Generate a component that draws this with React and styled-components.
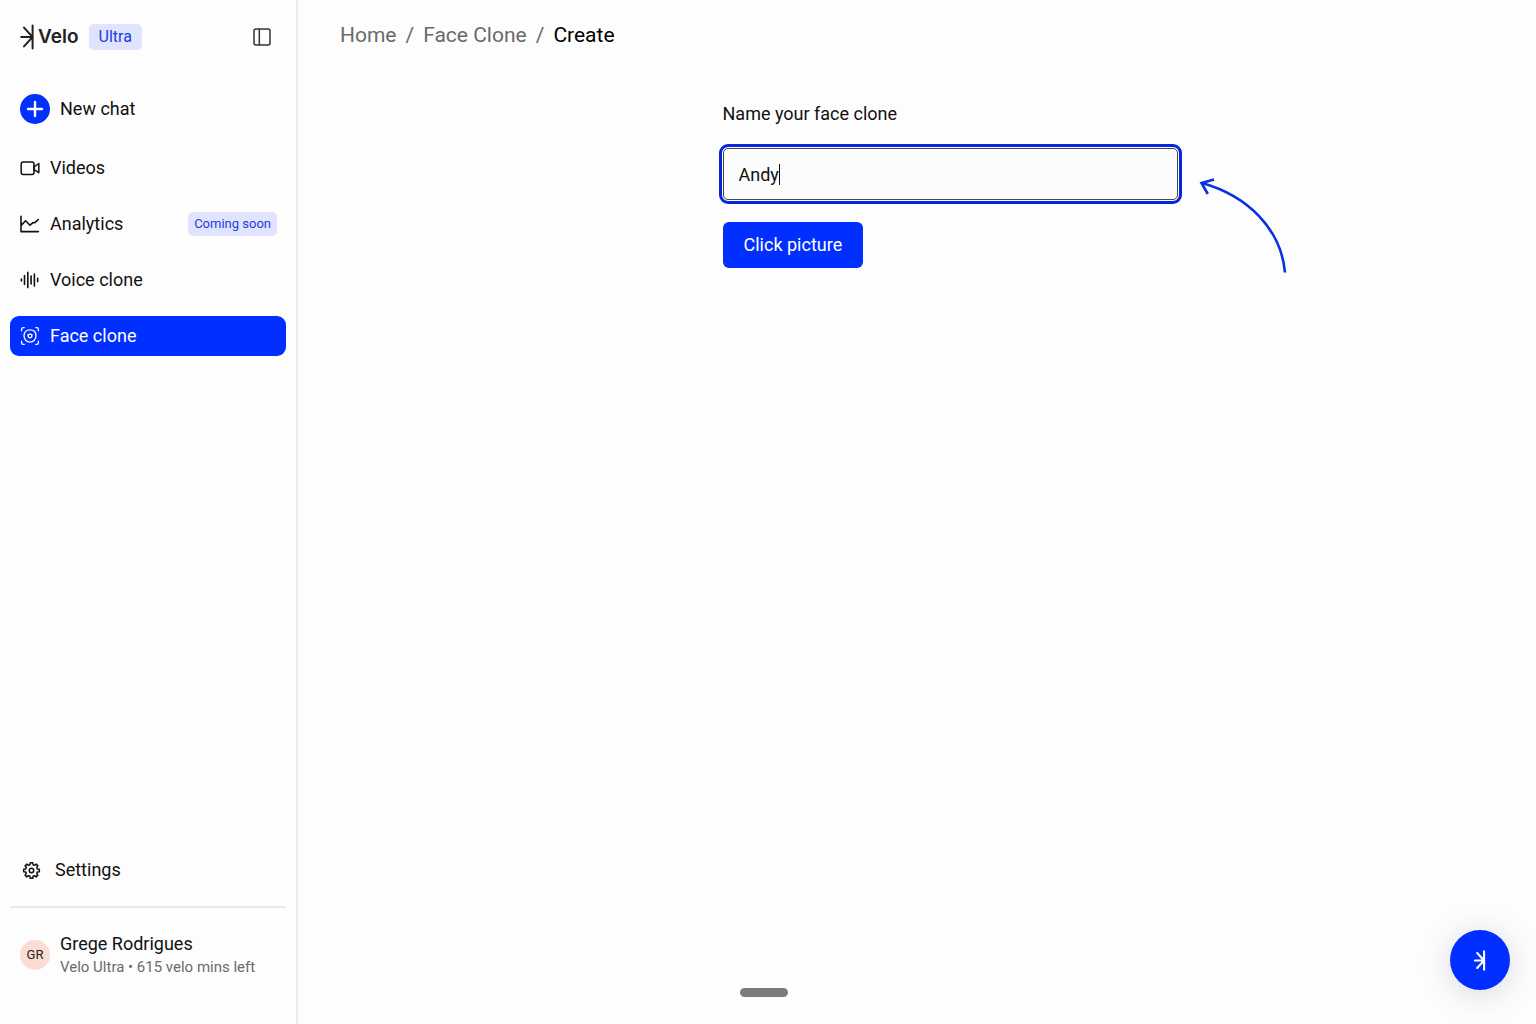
import React, { useLayoutEffect, useRef, useState } from 'react';
import styled, { createGlobalStyle } from 'styled-components';

const GlobalStyle = createGlobalStyle`
  * {
    box-sizing: border-box;
  }

  body {
    margin: 0;
    background-color: #fdfdfd;
    color: #111;
    font-family: Roboto, 'Liberation Sans', sans-serif;
    font-size: 18px;
    line-height: 24px;
  }

  button,
  input {
    font: inherit;
  }
`;

const Page = styled.div`
  display: flex;
  min-height: 100vh;
`;

const Sidebar = styled.aside`
  flex: 0 0 298px;
  display: flex;
  flex-direction: column;
  padding: 17px 10px 46px;
  border-right: 2px solid #ebebeb;
`;

const SidebarHeader = styled.div`
  display: flex;
  align-items: center;
  height: 40px;
  padding: 0 10px;
  margin-bottom: 32px;
`;

const Brand = styled.a`
  display: flex;
  align-items: center;
  gap: 3px;
  margin-right: 10px;
  color: #222;
  font-family: Inter, sans-serif;
  font-size: 19px;
  font-weight: 600;
  text-decoration: none;
`;

const Badge = styled.span`
  display: flex;
  align-items: center;
  height: ${({ $small }) => ($small ? '24px' : '26px')};
  padding: ${({ $small }) => ($small ? '0 6px' : '0 10px')};
  border-radius: 5px;
  background-color: #e0e3fd;
  color: #1a3fe0;
  font-size: ${({ $small }) => ($small ? '13px' : '16px')};
`;

const CollapseButton = styled.button`
  display: flex;
  margin-left: auto;
  padding: 5px;
  border: none;
  background: none;
  color: #333;
  cursor: pointer;
`;

const NavItem = styled.a`
  display: flex;
  align-items: center;
  gap: 10px;
  height: 40px;
  padding: 0 9px 0 10px;
  border-radius: 9px;
  background-color: ${({ $active }) => ($active ? '#002fff' : 'transparent')};
  color: ${({ $active }) => ($active ? '#fff' : '#111')};
  text-decoration: none;

  ${Badge} {
    margin-left: auto;
  }
`;

const PlusCircle = styled.span`
  display: flex;
  align-items: center;
  justify-content: center;
  width: 30px;
  height: 30px;
  border-radius: 50%;
  background-color: #002fff;
  color: #fff;
`;

const Nav = styled.nav`
  display: flex;
  flex-direction: column;
  gap: 16px;
  margin-top: 19px;
`;

const SidebarFooter = styled.div`
  margin-top: auto;
`;

const SettingsLink = styled(NavItem)`
  gap: 14px;
  padding-left: 12px;
`;

const Divider = styled.hr`
  height: 2px;
  margin: 16px 0 24px;
  border: none;
  background-color: #e9e9e9;
`;

const Profile = styled.div`
  display: flex;
  align-items: center;
  gap: 10px;
  padding: 0 10px;
`;

const Avatar = styled.span`
  display: flex;
  align-items: center;
  justify-content: center;
  width: 30px;
  height: 30px;
  border-radius: 50%;
  background-color: #fbdcd3;
  color: #222;
  font-size: 13px;
`;

const ProfilePlan = styled.div`
  color: #6b6b6b;
  font-size: 15px;
  line-height: 22px;
`;

const Main = styled.main`
  flex: 1;
  padding: 23px 42px;
`;

const Breadcrumbs = styled.nav`
  display: flex;
  gap: 9px;
  color: #6a6a6a;
  font-size: 21px;
`;

const Crumb = styled.a`
  color: ${({ $current }) => ($current ? '#000' : '#6a6a6a')};
  text-decoration: none;
`;

const Form = styled.form`
  display: flex;
  flex-direction: column;
  align-items: flex-start;
  width: 100%;
  padding-left: 66px;
  margin-top: 55px;
`;

const FormColumn = styled.div`
  width: 100%;
  max-width: 455px;
  margin: 0 auto;
`;

const Field = styled.div`
  position: relative;
  margin: 22px 0;
`;

const NameInput = styled.input`
  display: block;
  width: 100%;
  height: 52px;
  padding: 0 15px;
  border: 1px solid #444;
  border-radius: 5px;
  outline: 3px solid #0526dd;
  outline-offset: 1px;
  background-color: #fcfcfc;
  color: #111;
  caret-color: transparent;
`;

const Caret = styled.span`
  position: absolute;
  top: 16px;
  width: 1px;
  height: 21px;
  background-color: #111;
`;

const ArrowHint = styled.svg`
  position: absolute;
  top: 27px;
  left: calc(100% + 20px);
`;

const SubmitButton = styled.button`
  height: 46px;
  padding: 0 21px;
  border: none;
  border-radius: 6px;
  background-color: #002fff;
  color: #fff;
  cursor: pointer;
`;

const HelpButton = styled.button`
  position: fixed;
  right: 26px;
  bottom: 34px;
  display: flex;
  align-items: center;
  justify-content: center;
  width: 60px;
  height: 60px;
  padding: 0;
  border: none;
  border-radius: 50%;
  background-color: #002fff;
  color: #fff;
  box-shadow: 0 4px 32px rgba(0, 0, 0, 0.15);
  cursor: pointer;
`;

const BottomBar = styled.div`
  position: fixed;
  right: 8px;
  bottom: 27px;
  left: 0;
  display: flex;
  justify-content: center;
  pointer-events: none;
`;

const Handle = styled.span`
  width: 48px;
  height: 9px;
  border-radius: 5px;
  background-color: #7c7c7c;
`;

const LogoMark = ({ width, height, strokeWidth = 2 }) => (
  <svg width={width} height={height} viewBox="0 0 15 26" fill="none" stroke="currentColor" strokeWidth={strokeWidth} strokeLinecap="round" aria-hidden="true">
    <path d="M12.6 1.5v23M1.2 13h11.4M4 3.6l8.6 9.4L4 22.4" />
  </svg>
);

const PanelIcon = () => (
  <svg width="18" height="18" viewBox="0 0 18 18" fill="none" stroke="currentColor" strokeWidth="1.5" aria-hidden="true">
    <rect x="1" y="1" width="16" height="16" rx="2" />
    <path d="M6.3 1v16" />
  </svg>
);

const PlusIcon = () => (
  <svg width="18" height="18" viewBox="0 0 18 18" fill="none" stroke="currentColor" strokeWidth="2.4" strokeLinecap="round" aria-hidden="true">
    <path d="M9 2v14M2 9h14" />
  </svg>
);

const VideoIcon = () => (
  <svg width="20" height="20" viewBox="0 0 20 20" fill="none" stroke="currentColor" strokeWidth="1.5" strokeLinejoin="round" aria-hidden="true">
    <rect x="1.2" y="4" width="12.8" height="12.4" rx="2" />
    <path d="M14 8.8l4.8-3.3v9.2L14 11.6z" />
  </svg>
);

const AnalyticsIcon = () => (
  <svg width="20" height="20" viewBox="0 0 20 20" fill="none" stroke="currentColor" strokeWidth="1.6" strokeLinecap="round" strokeLinejoin="round" aria-hidden="true">
    <path d="M1 2.2v15.4h17.4M1.2 11.4l4.4-4.6 4.4 4.4 3-2.6 1.6.2 3.6-3.2" />
  </svg>
);

const VoiceIcon = () => (
  <svg width="20" height="20" viewBox="0 0 20 20" fill="none" stroke="currentColor" strokeWidth="1.6" strokeLinecap="round" aria-hidden="true">
    <path d="M1.4 9v2M4.5 5.6v8.8M7.8 2.4v15.2M11.1 6v8M14.4 4v12M17.7 8.4v3.2" />
  </svg>
);

const FaceIcon = () => (
  <svg width="20" height="20" viewBox="0 0 20 20" fill="none" stroke="currentColor" strokeWidth="1.3" strokeLinecap="round" strokeLinejoin="round" aria-hidden="true">
    <path d="M1.6 4.8V3.2A1.6 1.6 0 0 1 3.2 1.6h1M15.8 1.6h1a1.6 1.6 0 0 1 1.6 1.6v1.6M18.4 15.2v1.6a1.6 1.6 0 0 1-1.6 1.6h-1M4.2 18.4h-1a1.6 1.6 0 0 1-1.6-1.6v-1.6" />
    <path d="M10 3.8c3.6 0 6 2.2 6 5.8 0 3.7-2.4 6.6-6 6.6s-6-2.9-6-6.6c0-3.6 2.4-5.8 6-5.8z" />
    <path d="M8.1 8.6c1.2-.7 2.6-.7 3.8 0 .2 1.7-.6 3-1.9 3.4-1.3-.4-2.1-1.7-1.9-3.4z" />
  </svg>
);

// Eight teeth, four corners each: [angle in degrees, radius]
const toothCorners = [[-15, 7.6], [-9, 10], [9, 10], [15, 7.6]];
const gearPoints = Array.from({ length: 8 }, (_, tooth) =>
  toothCorners.map(([offset, radius]) => {
    const angle = ((tooth * 45 + offset) * Math.PI) / 180;
    return `${(12 + radius * Math.cos(angle)).toFixed(2)},${(12 + radius * Math.sin(angle)).toFixed(2)}`;
  }).join(' ')
).join(' ');

const GearIcon = () => (
  <svg width="19" height="19" viewBox="0 0 24 24" fill="none" stroke="currentColor" strokeWidth="1.9" strokeLinejoin="round" aria-hidden="true">
    <polygon points={gearPoints} />
    <circle cx="12" cy="12" r="2.8" />
  </svg>
);

const navItems = [
  { label: 'Videos', icon: VideoIcon },
  { label: 'Analytics', icon: AnalyticsIcon, badge: 'Coming soon' },
  { label: 'Voice clone', icon: VoiceIcon },
  { label: 'Face clone', icon: FaceIcon, active: true },
];

const App = () => {
  const [name, setName] = useState('Andy');
  const [caretLeft, setCaretLeft] = useState(16);
  const inputRef = useRef(null);

  // Keep the caret right behind the typed text
  useLayoutEffect(() => {
    const context = document.createElement('canvas').getContext('2d');
    const { fontSize, fontFamily } = getComputedStyle(inputRef.current);
    context.font = `${fontSize} ${fontFamily}`;
    setCaretLeft(Math.round(16 + context.measureText(name).width));
  }, [name]);

  return (
    <>
      <GlobalStyle />
      <Page>
        <Sidebar>
          <SidebarHeader>
            <Brand href="#">
              <LogoMark width={15} height={26} />
              Velo
            </Brand>
            <Badge>Ultra</Badge>
            <CollapseButton type="button" aria-label="Collapse sidebar">
              <PanelIcon />
            </CollapseButton>
          </SidebarHeader>
          <NavItem href="#new">
            <PlusCircle>
              <PlusIcon />
            </PlusCircle>
            New chat
          </NavItem>
          <Nav>
            {navItems.map(({ label, icon: Icon, badge, active }) => (
              <NavItem key={label} href="#" $active={active}>
                <Icon />
                {label}
                {badge && <Badge $small>{badge}</Badge>}
              </NavItem>
            ))}
          </Nav>
          <SidebarFooter>
            <SettingsLink href="#settings">
              <GearIcon />
              Settings
            </SettingsLink>
            <Divider />
            <Profile>
              <Avatar>GR</Avatar>
              <div>
                <div>Grege Rodrigues</div>
                <ProfilePlan>Velo Ultra • 615 velo mins left</ProfilePlan>
              </div>
            </Profile>
          </SidebarFooter>
        </Sidebar>
        <Main>
          <Breadcrumbs aria-label="Breadcrumb">
            <Crumb href="#">Home</Crumb>
            <span>/</span>
            <Crumb href="#">Face Clone</Crumb>
            <span>/</span>
            <Crumb href="#" $current aria-current="page">Create</Crumb>
          </Breadcrumbs>
          <Form onSubmit={(e) => e.preventDefault()}>
            <FormColumn>
              <label htmlFor="clone-name">Name your face clone</label>
              <Field>
                <NameInput
                  id="clone-name"
                  ref={inputRef}
                  value={name}
                  autoComplete="off"
                  onChange={(e) => setName(e.target.value)}
                />
                <Caret style={{ left: caretLeft }} />
                <ArrowHint width="92" height="104" viewBox="1198 175 92 104" fill="none" stroke="#0a30e0" strokeWidth="2.6" aria-hidden="true">
                  <path d="M1202 183C1248 196 1281 229 1285 272.5" />
                  <path d="M1214 179.6L1201.5 183l6.3 11" />
                </ArrowHint>
              </Field>
              <SubmitButton type="submit">Click picture</SubmitButton>
            </FormColumn>
          </Form>
        </Main>
      </Page>
      <BottomBar>
        <Handle />
      </BottomBar>
      <HelpButton type="button" aria-label="Open Velo assistant">
        <LogoMark width={12} height={21} strokeWidth={2.6} />
      </HelpButton>
    </>
  );
};

export default App;
